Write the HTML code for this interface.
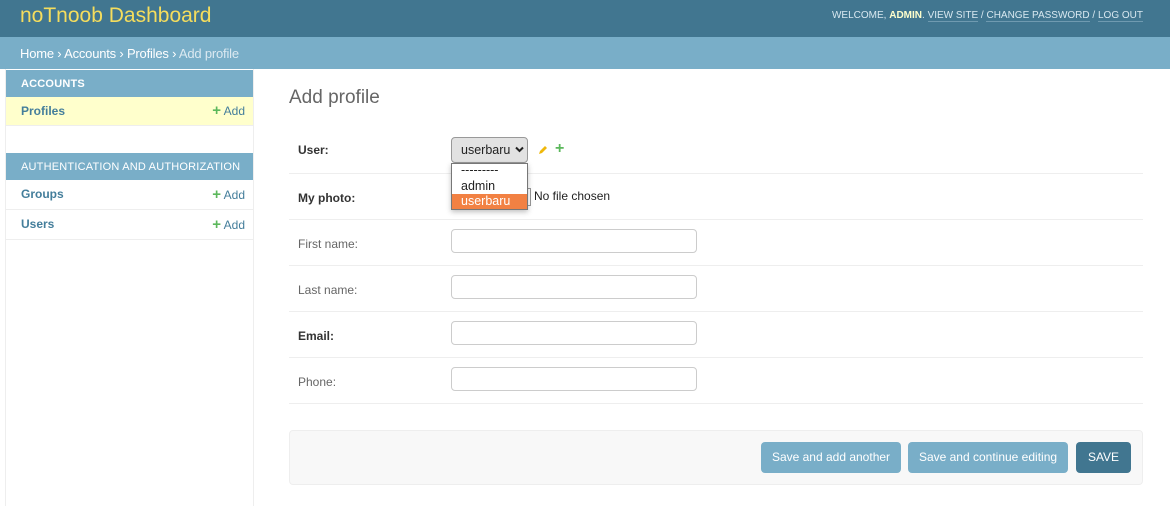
<!DOCTYPE html>
<html><head><style>
*{box-sizing:border-box;margin:0;padding:0}
body{width:1170px;height:506px;overflow:hidden;background:#fff;font-family:"Liberation Sans",sans-serif;position:relative;font-size:13px;color:#333}
.a{position:absolute}
#hd{left:0;top:0;width:1170px;height:37px;background:#417690}
#bc{left:0;top:37px;width:1170px;height:32px;background:#79aec8;color:#fff;font-size:13px;padding:9px 20px;white-space:nowrap;letter-spacing:-.2px}
.cap{background:#79aec8;color:#fff;font-size:11px;left:6px;width:247px;height:27px;padding:8px 15px;white-space:nowrap;letter-spacing:.2px}
.row{left:6px;width:247px;border-bottom:1px solid #eee;font-size:12px;font-weight:bold;color:#447e9b;padding:0 15px}
.add{position:absolute;right:8px;font-weight:normal;color:#447e9b}
.add b{color:#5cb85c;font-size:15px;font-weight:bold}
.lbl{left:298px;font-size:12px;color:#666}
.lb{font-weight:bold;color:#333}
.hr{left:289px;width:854px;height:1px;background:#eee}
.inp{left:451px;width:246px;height:24px;border:1px solid #ccc;border-radius:4px}
.btn{top:442px;height:31px;border-radius:4px;color:#fff;font-size:12px;text-align:center;line-height:31px;background:#79aec8;white-space:nowrap}
</style></head><body>
<div id="hd" class="a"></div>
<div class="a" style="left:20px;top:4px;font-size:21px;color:#f5dd5d">noTnoob Dashboard</div>
<div class="a" style="right:27px;top:10px;font-size:10px;color:#d8e8f0;white-space:nowrap">WELCOME, <b style="color:#ffc">ADMIN</b>. <span style="border-bottom:1px solid #6f9ab0">VIEW SITE</span> / <span style="border-bottom:1px solid #6f9ab0">CHANGE PASSWORD</span> / <span style="border-bottom:1px solid #6f9ab0">LOG OUT</span></div>
<div id="bc" class="a">Home › Accounts › Profiles › <span style="color:#dbe9f1">Add profile</span></div>
<div class="a" style="left:253px;top:69px;width:1px;height:437px;background:#eee"></div>
<div class="a" style="left:5px;top:69px;width:1px;height:437px;background:#eee"></div>
<div class="a cap" style="top:70px;font-weight:bold">ACCOUNTS</div>
<div class="a row" style="top:97px;height:29px;line-height:28px;background:#ffc">Profiles<span class="add"><b>+</b> Add</span></div>
<div class="a cap" style="top:153px">AUTHENTICATION AND AUTHORIZATION</div>
<div class="a row" style="top:180px;height:30px;line-height:29px">Groups<span class="add"><b>+</b> Add</span></div>
<div class="a row" style="top:210px;height:30px;line-height:29px">Users<span class="add"><b>+</b> Add</span></div>
<div class="a" style="left:289px;top:87px;font-size:19px;color:#666">Add profile</div>
<div class="a lbl lb" style="top:143px">User:</div>
<div class="a" style="left:451px;top:137px;width:77px;height:26px;border:1px solid #999;border-radius:4px;background:#e2e2e2;font-size:12.5px;padding:5px 9px;color:#222">userbaru</div>
<svg class="a" style="left:515px;top:146px" width="9" height="7" viewBox="0 0 9 7"><path d="M1 1.5l3.5 3.5 3.5-3.5" stroke="#222" stroke-width="2" fill="none"/></svg>
<svg class="a" style="left:537px;top:144px" width="12" height="12" viewBox="0 0 12 12"><path d="M2 10l1-3 5-5 2 2-5 5z" fill="#efb80b"/></svg>
<div class="a" style="left:555px;top:140px;color:#5cb85c;font-size:16px;font-weight:bold">+</div>
<div class="a hr" style="top:173px"></div>
<div class="a lbl lb" style="top:191px">My photo:</div>
<div class="a" style="left:527px;top:188px;width:4px;height:18px;border:1px solid #999;border-left:none"></div>
<div class="a" style="left:534px;top:189px;font-size:12px;color:#222">No file chosen</div>
<div class="a" style="left:451px;top:163px;width:77px;height:47px;background:#fff;border:1px solid #777;box-shadow:0 2px 5px rgba(0,0,0,.25);font-size:12.5px;color:#222">
<div style="height:15px;padding:0 9px;line-height:12px">---------</div>
<div style="height:15px;padding:0 9px;line-height:15px">admin</div>
<div style="height:15px;padding:0 9px;line-height:15px;background:#f28143;color:#fff">userbaru</div></div>
<div class="a hr" style="top:219px"></div>
<div class="a lbl" style="top:237px">First name:</div><div class="a inp" style="top:229px"></div>
<div class="a hr" style="top:265px"></div>
<div class="a lbl" style="top:283px">Last name:</div><div class="a inp" style="top:275px"></div>
<div class="a hr" style="top:311px"></div>
<div class="a lbl lb" style="top:329px">Email:</div><div class="a inp" style="top:321px"></div>
<div class="a hr" style="top:357px"></div>
<div class="a lbl" style="top:375px">Phone:</div><div class="a inp" style="top:367px"></div>
<div class="a hr" style="top:403px"></div>
<div class="a" style="left:289px;top:430px;width:854px;height:55px;background:#f8f8f8;border:1px solid #eee;border-radius:4px"></div>
<div class="a btn" style="left:761px;width:140px">Save and add another</div>
<div class="a btn" style="left:908px;width:160px">Save and continue editing</div>
<div class="a btn" style="left:1076px;width:55px;background:#417690">SAVE</div>
</body></html>
